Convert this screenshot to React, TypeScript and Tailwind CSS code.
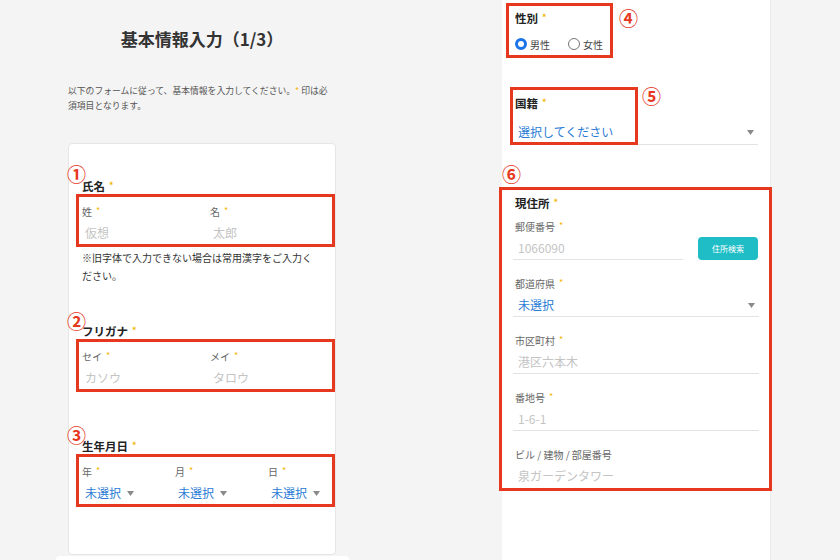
import React from "react";

const Req = () => (
  <span className="relative top-[-2px] ml-[4px] text-[9px] leading-none text-[#f2b705]">*</span>
);

const Caret = () => (
  <svg width="7" height="5" viewBox="0 0 7 5" className="shrink-0">
    <path d="M0 0h7L3.5 5z" fill="#8a8a8a" />
  </svg>
);

const Label = ({ text, req = true }: { text: string; req?: boolean }) => (
  <div className="h-[14px] pl-[2px] text-[10px] leading-[14px] text-[#666]">
    {text}
    {req && <Req />}
  </div>
);

const Heading = ({ text }: { text: string }) => (
  <div className="h-[16px] text-[11.5px] font-bold leading-[16px] text-[#222]">
    {text}
    <Req />
  </div>
);

const TextField = ({ label, placeholder, req = true, line = true }: { label: string; placeholder: string; req?: boolean; line?: boolean }) => (
  <div>
    <Label text={label} req={req} />
    <div className={`mt-[3px] h-[23px] pl-[5px] text-[12px] leading-[22px] text-[#c4c4c4] ${line ? "border-b border-[#e3e3e3]" : ""}`}>
      {placeholder}
    </div>
  </div>
);

export default function App() {
  return (
    <div className="flex h-[560px] w-[840px] overflow-hidden bg-[#f4f4f4] font-['Noto_Sans_CJK_JP',sans-serif]">
      {/* left phone screen */}
      <div className="ml-[68px] flex w-[268px] flex-col">
        <h1 className="mt-[27px] h-[24px] text-center text-[17px] font-bold leading-[24px] text-[#333]">
          基本情報入力（1/3）
        </h1>
        <p className="mt-[33px] whitespace-nowrap text-[8.8px] leading-[14.5px] text-[#555]">
          以下のフォームに従って、基本情報を入力してください。<span className="text-[#f2b705]">*</span> 印は必
          <br />
          須項目となります。
        </p>

        <div className="relative mt-[30px] h-[412px] rounded-[4px] border border-[#e6e6e6] bg-white pt-[35px]">
          <span className="absolute left-[-2px] top-[20px] text-[19px] font-bold leading-none text-[#e5381e]">①</span>
          <span className="absolute left-[-2px] top-[167px] text-[19px] font-bold leading-none text-[#e5381e]">②</span>
          <span className="absolute left-[-2px] top-[281px] text-[19px] font-bold leading-none text-[#e5381e]">③</span>

          {/* 氏名 */}
          <div className="h-[15px] pl-[13px] text-[11.5px] font-bold leading-[15px] text-[#222]">
            氏名<Req />
          </div>
          <div className="ml-[7px] w-[259px] border-[3px] border-[#e5381e] pl-[1px] pt-[8px]">
            <div className="grid grid-cols-[128px_1fr]">
              <div>
                <Label text="姓" />
                <div className="mt-[3px] h-[22px] pl-[5px] text-[12px] leading-[22px] text-[#c4c4c4]">仮想</div>
              </div>
              <div>
                <Label text="名" />
                <div className="mt-[3px] h-[22px] pl-[5px] text-[12px] leading-[22px] text-[#c4c4c4]">太郎</div>
              </div>
            </div>
          </div>
          <p className="mt-[2px] pl-[13px] text-[10px] leading-[18px] text-[#333]">
            ※旧字体で入力できない場合は常用漢字をご入力く
            <br />
            ださい。
          </p>

          {/* フリガナ */}
          <div className="mt-[39px] h-[15px] pl-[13px] text-[11.5px] font-bold leading-[15px] text-[#222]">
            フリガナ<Req />
          </div>
          <div className="ml-[7px] w-[259px] border-[3px] border-[#e5381e] pl-[1px] pt-[8px]">
            <div className="grid grid-cols-[128px_1fr]">
              <div>
                <Label text="セイ" />
                <div className="mt-[3px] h-[22px] pl-[5px] text-[12px] leading-[22px] text-[#c4c4c4]">カソウ</div>
              </div>
              <div>
                <Label text="メイ" />
                <div className="mt-[3px] h-[22px] pl-[5px] text-[12px] leading-[22px] text-[#c4c4c4]">タロウ</div>
              </div>
            </div>
          </div>

          {/* 生年月日 */}
          <div className="mt-[47px] h-[15px] pl-[13px] text-[11.5px] font-bold leading-[15px] text-[#222]">
            生年月日<Req />
          </div>
          <div className="ml-[7px] w-[259px] border-[3px] border-[#e5381e] pl-[1px] pt-[8px]">
            <div className="grid grid-cols-[93px_93px_1fr]">
              {["年", "月", "日"].map((l) => (
                <div key={l}>
                  <Label text={l} />
                  <div className="mt-[3px] flex h-[22px] items-center gap-[6px] pl-[5px] text-[12px] text-[#2a7bd5]">
                    未選択
                    <Caret />
                  </div>
                </div>
              ))}
            </div>
          </div>
        </div>
        <div className="ml-[-12px] mt-[1px] h-[4px] w-[293px] rounded-t-[4px] bg-white" />
      </div>

      {/* right phone screen */}
      <div className="relative ml-[166px] h-[560px] w-[269px] border-r border-[#ebebeb] bg-white pt-[3px]">
        {/* 性別 */}
        <div className="ml-[4px] h-[55px] w-[107px] border-[3px] border-[#e5381e] pl-[6px] pt-[4px]">
          <Heading text="性別" />
          <div className="mt-[10px] flex h-[16px] items-center text-[10px] text-[#444]">
            <span className="h-[12px] w-[12px] rounded-full border-[3.5px] border-[#1a73e8] bg-white" />
            <span className="ml-[3px]">男性</span>
            <span className="ml-[18px] h-[12px] w-[12px] rounded-full border border-[#777] bg-white" />
            <span className="ml-[3px]">女性</span>
          </div>
        </div>
        <span className="absolute left-[117px] top-[8px] text-[19px] font-bold leading-none text-[#e5381e]">④</span>

        {/* 国籍 */}
        <div className="relative mt-[37px]">
          <div className="ml-[13px]">
            <Heading text="国籍" />
          </div>
          <div className="ml-[13px] mt-[9px] flex h-[25px] w-[243px] items-center justify-between border-b border-[#e3e3e3] pl-[3px] pr-[4px] text-[12px] text-[#2a7bd5]">
            選択してください
            <Caret />
          </div>
          <div className="absolute left-[8px] top-[-8px] h-[58px] w-[128px] border-[3px] border-[#e5381e]" />
          <span className="absolute left-[140px] top-[-9px] text-[19px] font-bold leading-none text-[#e5381e]">⑤</span>
        </div>

        {/* 現住所 */}
        <div className="mt-[20px] h-[18px] text-[19px] font-bold leading-[18px] text-[#e5381e]">⑥</div>
        <div className="ml-[-3px] mt-[4px] w-[273px] border-[3px] border-[#e5381e] pl-[11px] pr-[10px] pt-[5px]">
          <div className="pl-[2px]">
            <Heading text="現住所" />
          </div>
          <div className="mt-[9px] flex flex-col gap-[17px]">
            <div>
              <Label text="郵便番号" />
              <div className="mt-[3px] flex items-end gap-[15px]">
                <div className="h-[23px] w-[170px] border-b border-[#e3e3e3] pl-[5px] text-[12px] leading-[22px] text-[#c4c4c4]">
                  1066090
                </div>
                <button className="h-[23px] w-[60px] rounded-[4px] bg-[#1fbec6] text-[8px] text-white">住所検索</button>
              </div>
            </div>
            <div>
              <Label text="都道府県" />
              <div className="mt-[3px] flex h-[23px] items-center justify-between border-b border-[#e3e3e3] pl-[5px] pr-[4px] text-[12px] text-[#2a7bd5]">
                未選択
                <Caret />
              </div>
            </div>
            <TextField label="市区町村" placeholder="港区六本木" />
            <TextField label="番地号" placeholder="1-6-1" />
            <TextField label="ビル / 建物 / 部屋番号" placeholder="泉ガーデンタワー" req={false} line={false} />
          </div>
        </div>
      </div>
    </div>
  );
}
